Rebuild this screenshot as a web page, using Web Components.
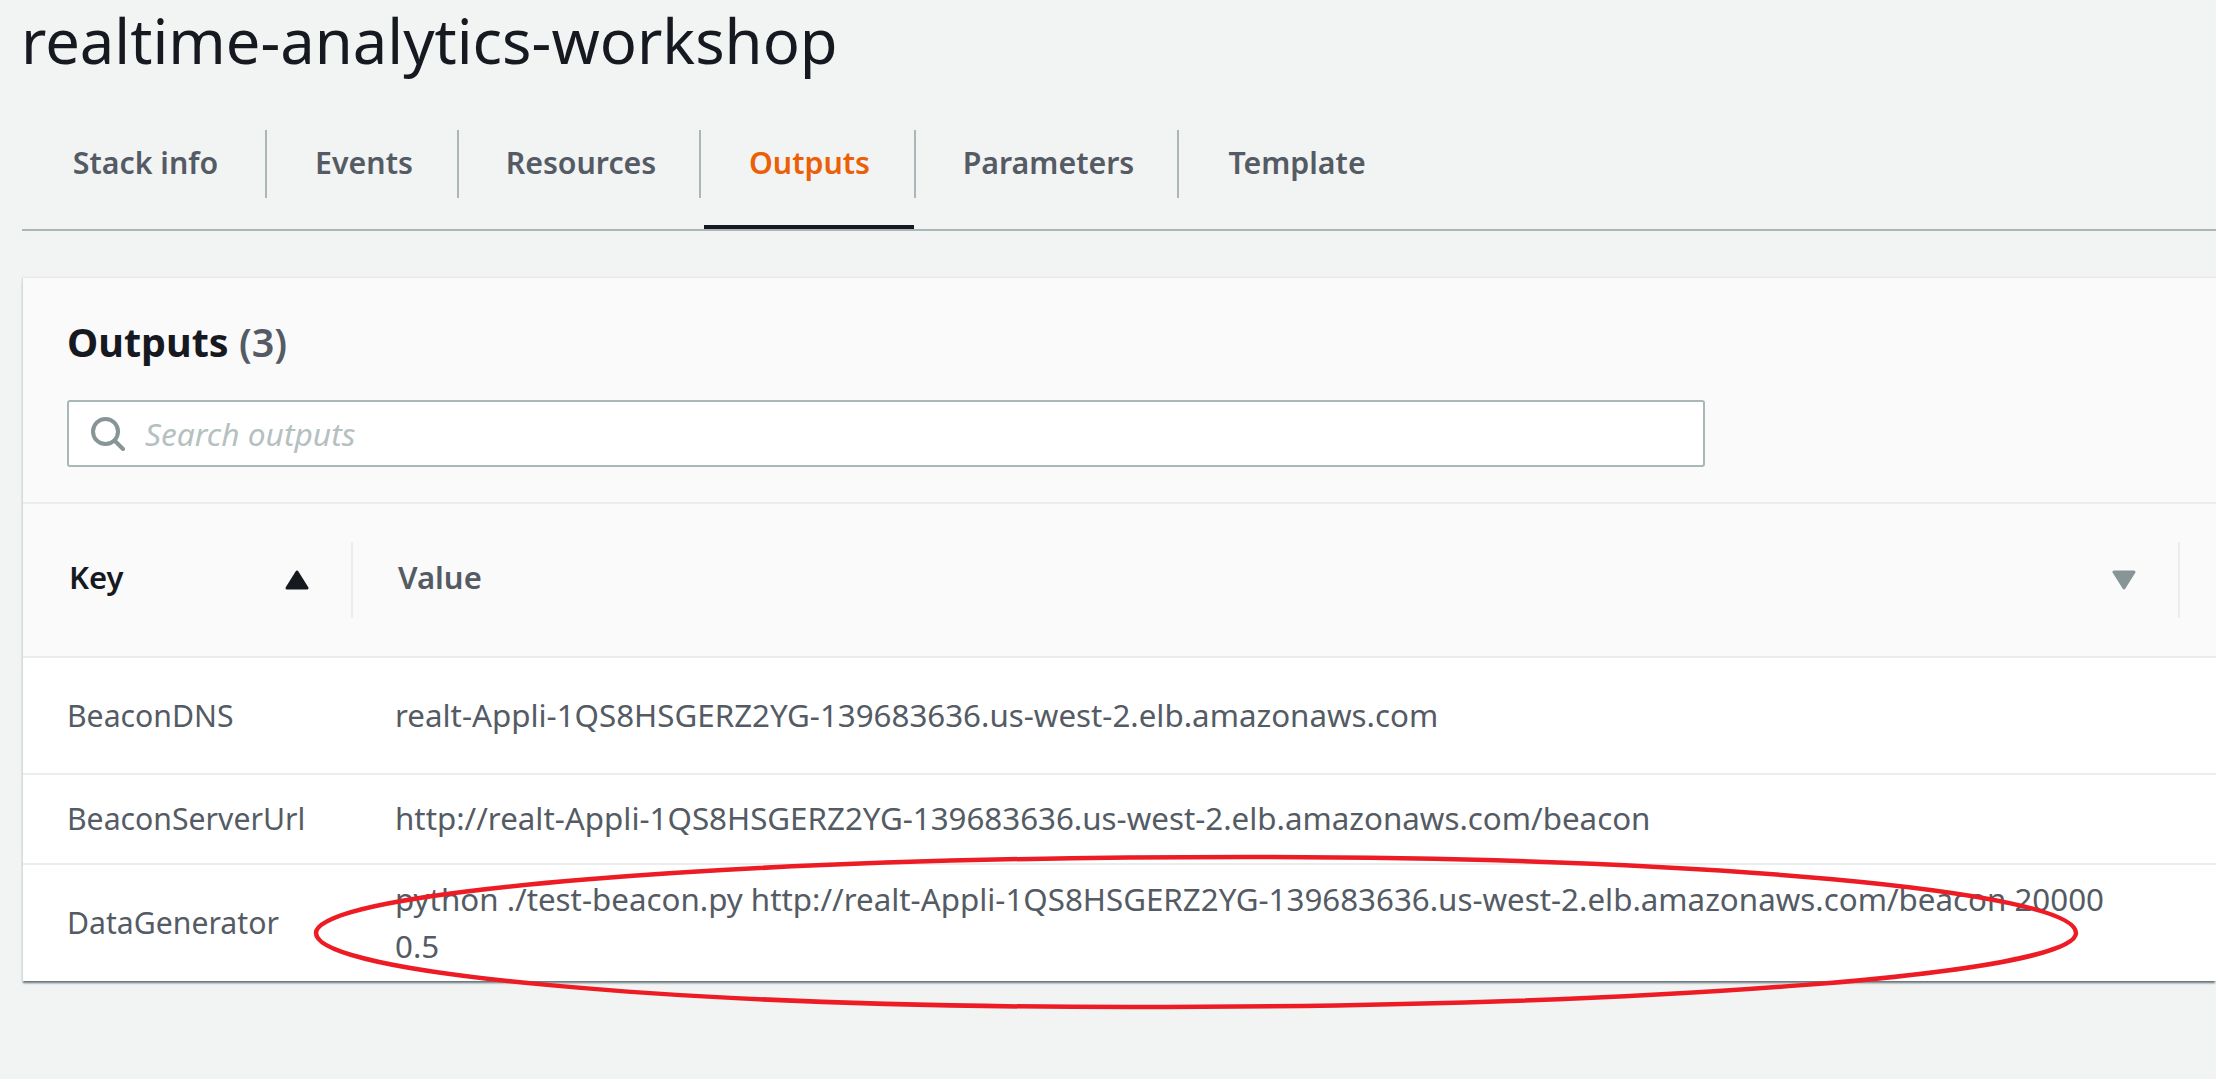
<!DOCTYPE html>
<html lang="en">
<head>
<meta charset="utf-8">
<title>realtime-analytics-workshop</title>
<style>
    html, body { margin: 0; height: 100%; }
    body {
        background: #f2f3f3;
        color: #16191f;
        font-family: "Noto Sans", "Open Sans", sans-serif;
        overflow: hidden;
        position: relative;
    }
</style>
</head>
<body>
<stack-page>
    <span slot="title">realtime-analytics-workshop</span>
    <stack-tabs slot="tabs">
        <stack-tab style="--w:245px">Stack info</stack-tab>
        <stack-tab style="--w:192px">Events</stack-tab>
        <stack-tab style="--w:242px">Resources</stack-tab>
        <stack-tab style="--w:215px" active>Outputs</stack-tab>
        <stack-tab style="--w:263px">Parameters</stack-tab>
        <stack-tab style="--w:232px" last>Template</stack-tab>
    </stack-tabs>
    <outputs-card slot="content" count="3">
        <search-field slot="search" placeholder="Search outputs"></search-field>
        <table-head slot="head"></table-head>
        <output-row slot="rows" height="115" name="BeaconDNS">realt-Appli-1QS8HSGERZ2YG-139683636.us-west-2.elb.amazonaws.com</output-row>
        <output-row slot="rows" height="88" name="BeaconServerUrl">http://realt-Appli-1QS8HSGERZ2YG-139683636.us-west-2.elb.amazonaws.com/beacon</output-row>
        <output-row slot="rows" height="116" name="DataGenerator" last>python ./test-beacon.py http://realt-Appli-1QS8HSGERZ2YG-139683636.us-west-2.elb.amazonaws.com/beacon 20000 0.5</output-row>
    </outputs-card>
</stack-page>
<red-circle></red-circle>

<script>
// small helper so every element gets an open shadow root from a string
class ShadowElement extends HTMLElement {
    constructor() {
        super();
        this.attachShadow({mode: "open"});
    }
    render(html) {
        const template = document.createElement("template");
        template.innerHTML = html;
        this.shadowRoot.appendChild(template.content.cloneNode(true));
    }
}

class StackPage extends ShadowElement {
    connectedCallback() {
        this.render(`
        <style>
            :host { display: block; }
            .title {
                height: 130px;
                box-sizing: border-box;
                padding: 0 0 0 21px;
                font-size: 61.5px;
                line-height: 80px;
                font-weight: 400;
                color: #16191f;
            }
            .content { padding: 47px 0 0 22px; }
        </style>
        <div class="title"><slot name="title"></slot></div>
        <slot name="tabs"></slot>
        <div class="content"><slot name="content"></slot></div>
        `);
    }
}

class StackTabs extends ShadowElement {
    connectedCallback() {
        this.render(`
        <style>
            :host {
                display: flex;
                margin-left: 22px;
                height: 99px;
                border-bottom: 2px solid #aab7b8;
            }
        </style>
        <slot></slot>
        `);
    }
}

class StackTab extends ShadowElement {
    connectedCallback() {
        this.render(`
        <style>
            :host {
                display: block;
                flex: none;
                box-sizing: border-box;
                width: var(--w);
                height: 99px;
                font-size: 30.3px;
                font-weight: 600;
                color: #545b64;
            }
            :host([active]) { color: #eb5f07; }
            .label {
                height: 68px;
                line-height: 66px;
                padding-left: 4px;
                text-align: center;
                box-sizing: border-box;
                border-right: 2px solid #aab7b8;
            }
            :host([last]) .label { border-right: none; }
            .bar { height: 4px; margin: 27px 2px 0 3px; }
            :host([active]) .bar { background: #16191f; }
        </style>
        <div class="label"><slot></slot></div>
        <div class="bar"></div>
        `);
    }
}

class OutputsCard extends ShadowElement {
    connectedCallback() {
        this.render(`
        <style>
            :host {
                display: block;
                background: #fafafa;
                border-left: 1px solid #d5dbdb;
                box-shadow: 0 3px 2px -1px rgba(0, 28, 36, .6), 0 -1px 2px 0 rgba(0, 28, 36, .06);
            }
            .header {
                box-sizing: border-box;
                height: 226px;
                padding: 40px 0 0 44px;
                border-bottom: 2px solid #eaeded;
            }
            h2 {
                margin: 0 0 34px;
                font-size: 39.5px;
                line-height: 48px;
                font-weight: 700;
                color: #16191f;
            }
            h2 span { font-weight: 600; color: #545b64; }
        </style>
        <div class="header">
            <h2>Outputs <span>(${this.getAttribute("count")})</span></h2>
            <slot name="search"></slot>
        </div>
        <slot name="head"></slot>
        <slot name="rows"></slot>
        `);
    }
}

class SearchField extends ShadowElement {
    connectedCallback() {
        this.render(`
        <style>
            :host {
                display: flex;
                align-items: center;
                box-sizing: border-box;
                width: 1638px;
                height: 67px;
                background: #fff;
                border: 2px solid #aab7b8;
                border-radius: 3px;
                padding-left: 22px;
                gap: 20px;
            }
            svg { flex: none; display: block; }
            .ph {
                font-size: 31.7px;
                font-style: italic;
                color: #b5c0c0;
            }
        </style>
        <svg width="34" height="34" viewBox="0 0 34 34" fill="none" stroke="#879596" stroke-width="4">
            <circle cx="14.5" cy="14.5" r="12.5"/>
            <path d="M23.5 23.5 L32 32" stroke-linecap="round"/>
        </svg>
        <span class="ph">${this.getAttribute("placeholder")}</span>
        `);
    }
}

class TableHead extends ShadowElement {
    connectedCallback() {
        this.render(`
        <style>
            :host {
                display: flex;
                align-items: center;
                box-sizing: border-box;
                height: 154px;
                border-bottom: 2px solid #eaeded;
                font-size: 31px;
                font-weight: 600;
            }
            .cell {
                display: flex;
                align-items: center;
                justify-content: space-between;
                box-sizing: border-box;
                height: 76px;
                border-right: 2px solid #eaeded;
            }
            .cell span { padding-bottom: 6px; }
            .key { width: 330px; padding: 0 42px 0 46px; color: #16191f; }
            .value { width: 1827px; padding: 0 42px 0 45px; color: #545b64; }
            svg { display: block; }
        </style>
        <div class="cell key">
            <span>Key</span>
            <svg width="24" height="20" viewBox="0 0 24 20"><path d="M12 2 L22 18 H2 Z" fill="#16191f" stroke="#16191f" stroke-width="3" stroke-linejoin="round"/></svg>
        </div>
        <div class="cell value">
            <span>Value</span>
            <svg width="24" height="20" viewBox="0 0 24 20"><path d="M2 2 H22 L12 18 Z" fill="#879596" stroke="#879596" stroke-width="3" stroke-linejoin="round"/></svg>
        </div>
        `);
    }
}

class OutputRow extends ShadowElement {
    connectedCallback() {
        this.render(`
        <style>
            :host {
                display: flex;
                align-items: center;
                box-sizing: border-box;
                background: #fff;
                height: ${Number(this.getAttribute("height")) + 2}px;
                border-bottom: 2px solid #eaeded;
                font-size: 31.3px;
                line-height: 47.5px;
                color: #545b64;
            }
            :host([last]) { height: 116px; border-bottom: none; }
            .key { flex: none; width: 329px; padding-left: 44px; box-sizing: border-box; font-size: 30.2px; }
            .value { width: 1757px; padding-left: 43px; box-sizing: border-box; }
        </style>
        <div class="key">${this.getAttribute("name")}</div>
        <div class="value"><slot></slot></div>
        `);
    }
}

// the hand drawn red mark on top of the last row
class RedCircle extends ShadowElement {
    connectedCallback() {
        this.render(`
        <style>
            :host { position: absolute; left: 0; top: 0; display: block; pointer-events: none; }
            svg { display: block; }
        </style>
        <svg width="2216" height="1079" viewBox="0 0 2216 1079" fill="none">
            <path d="M316 933 C316 891 732 857 1245 857 C1704 857 2076 891 2076 933 C2076 974 1653 1007 1130 1007 C675 1007 316 974 316 933 Z" stroke="#ed1c24" stroke-width="4.5"/>
        </svg>
        `);
    }
}

customElements.define("stack-page", StackPage);
customElements.define("stack-tabs", StackTabs);
customElements.define("stack-tab", StackTab);
customElements.define("outputs-card", OutputsCard);
customElements.define("search-field", SearchField);
customElements.define("table-head", TableHead);
customElements.define("output-row", OutputRow);
customElements.define("red-circle", RedCircle);
</script>
</body>
</html>
